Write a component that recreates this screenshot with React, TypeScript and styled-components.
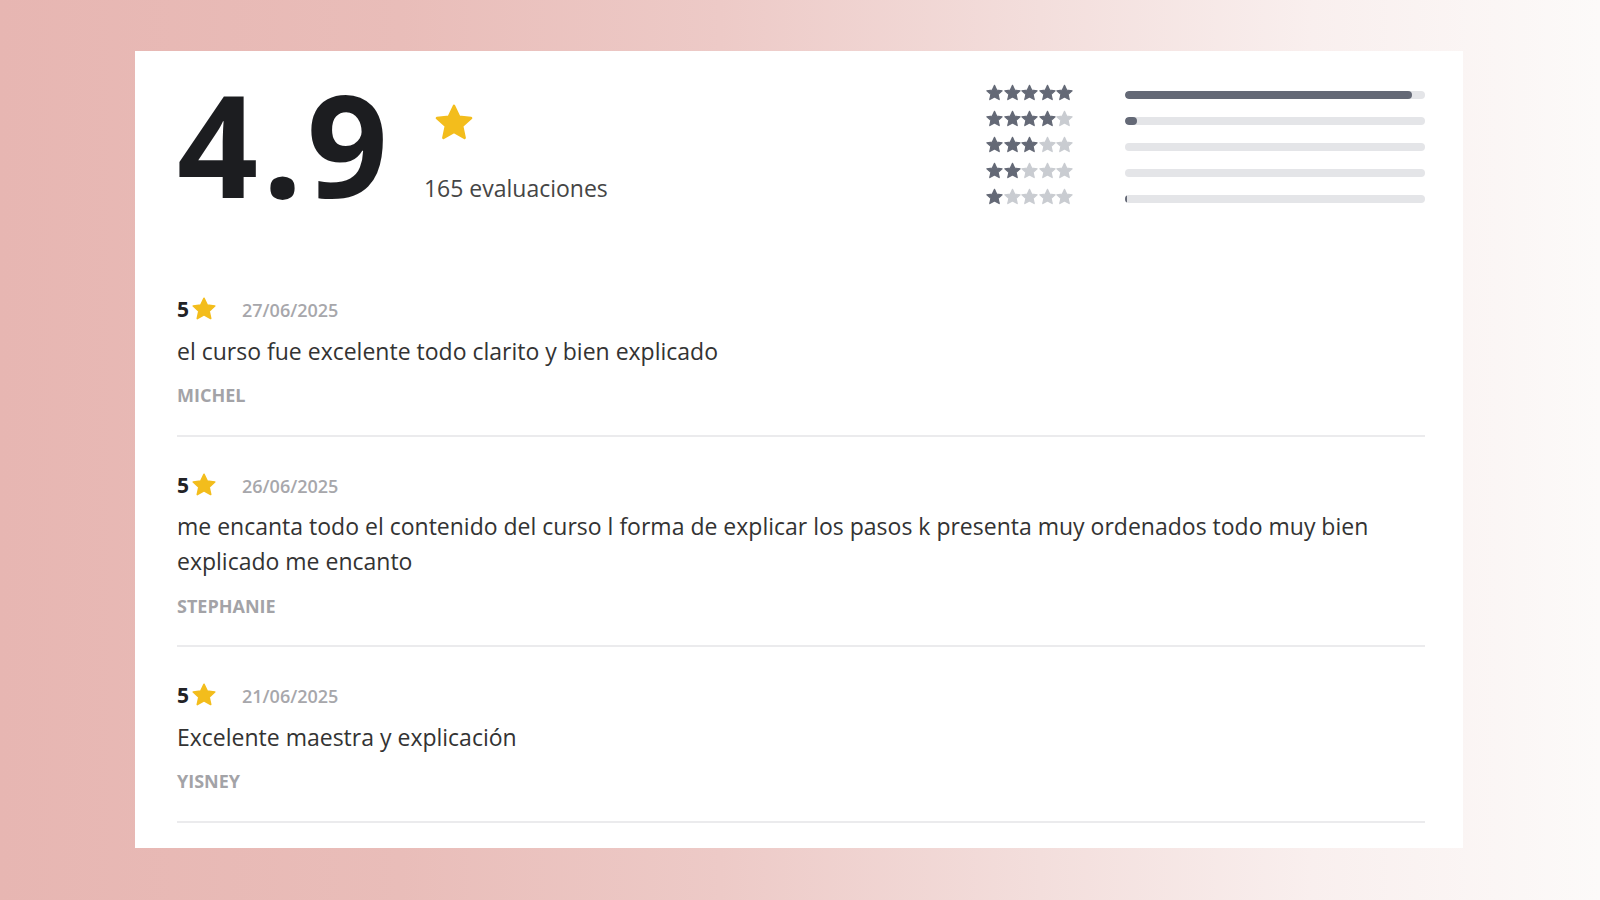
import React from "react";
import styled, { createGlobalStyle } from "styled-components";

const GlobalStyle = createGlobalStyle`
  html, body { margin: 0; padding: 0; }
  body {
    font-family: "Open Sans", "Noto Sans", "Liberation Sans", sans-serif;
    -webkit-font-smoothing: antialiased;
  }
  * { box-sizing: border-box; }
`;

const Page = styled.div`
  width: 1600px;
  height: 900px;
  padding: 51px 0 0 135px;
  background: linear-gradient(
    90deg,
    #e7b6b2 0%,
    #e9bdb9 25%,
    #edcac7 45%,
    #f3dedc 65%,
    #f9efee 82%,
    #fcfaf9 100%
  );
`;

const Card = styled.div`
  width: 1328px;
  height: 797px;
  background: #ffffff;
  padding: 21px 38px 0 42px;
`;

const Header = styled.div`
  display: flex;
  justify-content: space-between;
  align-items: flex-start;
  margin-bottom: 47px;
`;

const Summary = styled.div`
  display: flex;
  align-items: flex-start;
`;

const BigScore = styled.div`
  font-size: 142px;
  line-height: 1;
  height: 142px;
  font-weight: 700;
  color: #1c1d20;
  letter-spacing: 4px;
`;

const SummaryMeta = styled.div`
  display: flex;
  flex-direction: column;
  margin-left: 32px;
  padding-top: 32px;
`;

const BigStarWrap = styled.div`
  margin-left: 11px;
  width: 38px;
  height: 36px;
`;

const CountText = styled.div`
  margin-top: 34px;
  font-size: 23px;
  line-height: 28px;
  color: #454545;
`;

const Distribution = styled.div`
  display: flex;
  flex-direction: column;
  margin-top: 10px;
`;

const DistRow = styled.div`
  display: flex;
  align-items: center;
  height: 26px;
`;

const StarGroup = styled.div`
  display: flex;
  gap: 0.5px;
  width: 87px;
  margin-bottom: 5px;
`;

const Track = styled.div`
  margin-left: 52px;
  width: 300px;
  height: 8px;
  border-radius: 4px;
  background: #e4e5e8;
  overflow: hidden;
`;

const Fill = styled.div`
  height: 100%;
  border-radius: 4px;
  background: #646976;
`;

const ReviewList = styled.div`
  display: flex;
  flex-direction: column;
`;

const Review = styled.div`
  padding: 36px 0 29.5px;
  border-bottom: 2px solid #ebebed;
`;

const RatingRow = styled.div`
  display: flex;
  align-items: center;
  height: 24px;
`;

const RatingValue = styled.span`
  font-size: 21px;
  line-height: 24px;
  font-weight: 700;
  color: #222326;
`;

const SmallStarWrap = styled.span`
  display: inline-flex;
  width: 24px;
  height: 23px;
  margin-left: 3px;
  margin-top: -1px;
`;

const ReviewDate = styled.span`
  margin-left: 26px;
  font-size: 18px;
  line-height: 24px;
  font-weight: 600;
  color: #a7a7ab;
  padding-top: 2px;
`;

const ReviewBody = styled.p`
  margin: 12.5px 0 16.5px;
  font-size: 23px;
  line-height: 35px;
  color: #333333;
`;

const ReviewAuthor = styled.div`
  font-size: 18px;
  line-height: 20px;
  font-weight: 700;
  color: #a3a3a7;
  text-transform: uppercase;
`;

const STAR_POINTS =
  "12,1.6 15.1,8.1 22.3,8.9 16.9,13.8 18.4,20.9 12,17.3 5.6,20.9 7.1,13.8 1.7,8.9 8.9,8.1";

const Star: React.FC<{ color: string; size?: number; height?: number }> = ({
  color,
  size = 16,
  height,
}) => (
  <svg
    width={size}
    height={height ?? size}
    viewBox="0.5 0.4 23 21.8"
    style={{ display: "block" }}
  >
    <polygon
      points={STAR_POINTS}
      fill={color}
      stroke={color}
      strokeWidth={1.6}
      strokeLinejoin="round"
    />
  </svg>
);

const GOLD = "#f3bd1c";
const DARK = "#646976";
const LIGHT = "#c9ccd1";

const distribution = [
  { stars: 5, pct: 95.7 },
  { stars: 4, pct: 4 },
  { stars: 3, pct: 0 },
  { stars: 2, pct: 0 },
  { stars: 1, pct: 0.7 },
];

const reviews = [
  {
    rating: 5,
    date: "27/06/2025",
    text: "el curso fue excelente todo clarito y bien explicado",
    author: "MICHEL",
  },
  {
    rating: 5,
    date: "26/06/2025",
    text: "me encanta todo el contenido del curso l forma de explicar los pasos k presenta muy ordenados todo muy bien explicado me encanto",
    author: "STEPHANIE",
  },
  {
    rating: 5,
    date: "21/06/2025",
    text: "Excelente maestra y explicación",
    author: "YISNEY",
  },
];

export default function App() {
  return (
    <>
      <GlobalStyle />
      <Page>
        <Card>
          <Header>
            <Summary>
              <BigScore>4.9</BigScore>
              <SummaryMeta>
                <BigStarWrap>
                  <Star color={GOLD} size={38} height={36} />
                </BigStarWrap>
                <CountText>165 evaluaciones</CountText>
              </SummaryMeta>
            </Summary>
            <Distribution>
              {distribution.map((d) => (
                <DistRow key={d.stars}>
                  <StarGroup>
                    {[0, 1, 2, 3, 4].map((i) => (
                      <Star key={i} color={i < d.stars ? DARK : LIGHT} size={17} />
                    ))}
                  </StarGroup>
                  <Track>
                    <Fill style={{ width: `${d.pct}%` }} />
                  </Track>
                </DistRow>
              ))}
            </Distribution>
          </Header>
          <ReviewList>
            {reviews.map((r) => (
              <Review key={r.date}>
                <RatingRow>
                  <RatingValue>{r.rating}</RatingValue>
                  <SmallStarWrap>
                    <Star color={GOLD} size={24} height={23} />
                  </SmallStarWrap>
                  <ReviewDate>{r.date}</ReviewDate>
                </RatingRow>
                <ReviewBody>{r.text}</ReviewBody>
                <ReviewAuthor>{r.author}</ReviewAuthor>
              </Review>
            ))}
          </ReviewList>
        </Card>
      </Page>
    </>
  );
}
